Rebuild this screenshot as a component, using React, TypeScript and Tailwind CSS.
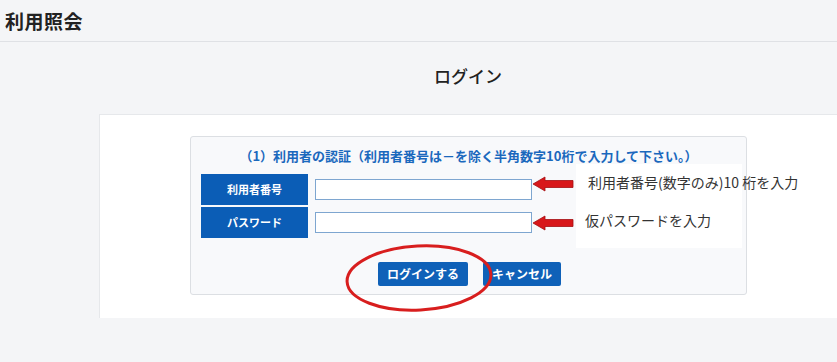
import React from 'react';

const jp = "font-['Noto_Sans_CJK_JP','Noto_Sans',sans-serif]";

function Arrow({ top }: { top: number }) {
    return (
        <svg className="absolute left-[532px]" style={{ top }} width="42" height="16" viewBox="0 0 42 16">
            <polygon points="1,8 13,1 13,4.5 41,4.5 41,11.5 13,11.5 13,15" fill="#d8171a" stroke="#a30f12" strokeWidth="0.8" />
        </svg>
    );
}

function FieldRow({ label }: { label: string }) {
    return (
        <div className="flex items-center h-[31px]">
            <div className="w-[107px] h-full bg-[#0b5db6] text-white text-[11px] font-bold flex items-center justify-center">
                {label}
            </div>
            <input className="ml-[7px] w-[217px] h-[21px] bg-white border border-[#7ea6d0] outline-none" />
        </div>
    );
}

export default function App() {
    return (
        <div className={`relative w-[837px] h-[362px] overflow-hidden bg-[#f4f5f7] text-[#222] ${jp}`}>
            {/* Page header */}
            <header className="h-[42px] border-b border-[#dfe1e5] pl-[5px] flex items-center">
                <h1 className="text-[19px] font-bold leading-none tracking-[0.5px]">利用照会</h1>
            </header>

            <main className="pl-[99px]">
                <h2 className="text-center text-[17px] font-medium leading-none pt-[25px] pb-[30px]">ログイン</h2>

                {/* Card */}
                <section className="bg-white h-[204px] border-t border-l border-[#e6e8eb] pt-[21px] flex justify-center">
                    <div className="w-[557px] h-[159px] bg-[#f8f9fb] border border-[#dcdfe3] rounded-[3px] px-[10px]">
                        <p className="text-center text-[13px] font-bold text-[#1a68bd] leading-none pt-[12px] pb-[12px]">
                            （1）利用者の認証（利用者番号は－を除く半角数字10桁で入力して下さい。）
                        </p>
                        <div className="flex flex-col gap-[2px]">
                            <FieldRow label="利用者番号" />
                            <FieldRow label="パスワード" />
                        </div>
                        <div className="flex justify-center gap-[15px] pt-[24px] pl-[2px]">
                            <button className="w-[90px] h-[24px] bg-[#0f61b8] text-white text-[12px] font-bold rounded-[2px]">
                                ログインする
                            </button>
                            <button className="w-[78px] h-[24px] bg-[#0f61b8] text-white text-[12px] font-bold rounded-[2px]">
                                キャンセル
                            </button>
                        </div>
                    </div>
                </section>
            </main>

            {/* Annotations laid over the screenshot */}
            <Arrow top={176} />
            <Arrow top={215} />
            <div className="absolute left-[576px] top-[164px] w-[166px] h-[84px] bg-white" />
            <span className="absolute left-[588px] top-[172px] text-[14px] leading-[20px] text-[#333] whitespace-nowrap">
                利用者番号(数字のみ)10 桁を入力
            </span>
            <span className="absolute left-[585px] top-[210px] text-[14px] leading-[20px] text-[#333] whitespace-nowrap">
                仮パスワードを入力
            </span>
            <svg className="absolute left-[344px] top-[242px]" width="152" height="72" viewBox="0 0 152 72">
                <ellipse cx="75" cy="36" rx="72" ry="32" fill="none" stroke="#d81e1e" strokeWidth="3" transform="rotate(-3 75 36)" />
            </svg>
        </div>
    );
}
